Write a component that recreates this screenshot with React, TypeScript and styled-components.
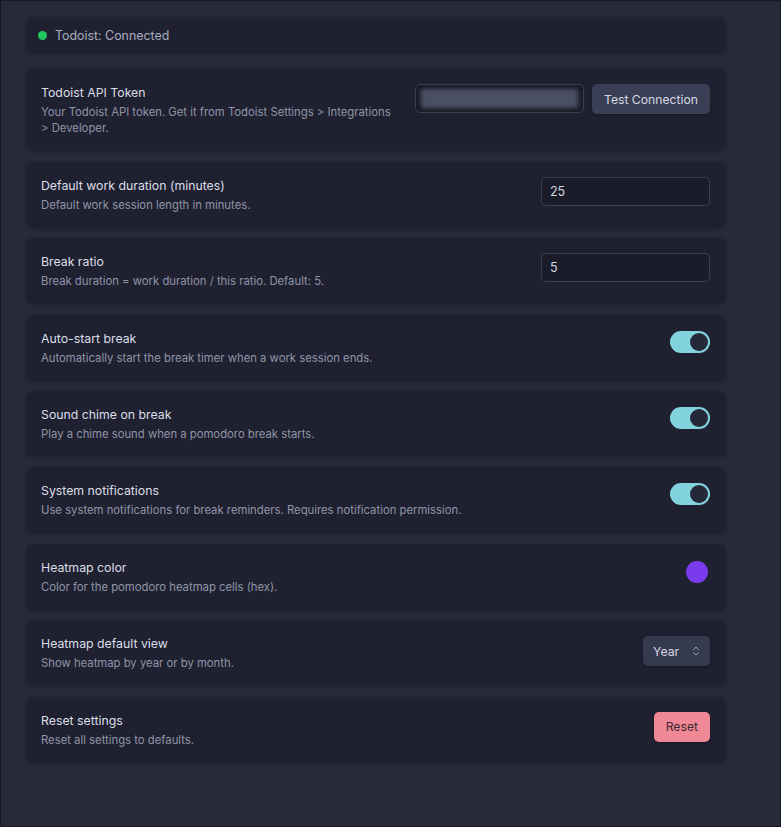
import React, { useState } from 'react';
import styled, { createGlobalStyle } from 'styled-components';
import { ChevronsUpDown } from 'lucide-react';

const GlobalStyle = createGlobalStyle`
    html, body {
        margin: 0;
        padding: 0;
        background: #262a3b;
        font-family: Inter, 'Noto Sans', sans-serif;
    }
    * {
        box-sizing: border-box;
    }
`;

const Page = styled.div`
    min-height: 100vh;
    border: 1px solid #161925;
    padding: 16px 0 40px 25px;
`;

const Column = styled.div`
    width: 700px;
    display: flex;
    flex-direction: column;
    gap: 10.4px;
`;

const Card = styled.div`
    background: #1f2131;
    border-radius: 8px;
    box-shadow: 0 1px 4px rgba(0, 0, 0, 0.22);
`;

const StatusCard = styled(Card)`
    height: 36px;
    display: flex;
    align-items: center;
    gap: 8px;
    padding: 0 12px;
    margin-bottom: 6px;
    font-size: 12.4px;
    color: #a9adbe;
`;

const Dot = styled.span<{ $color: string }>`
    width: 9px;
    height: 9px;
    border-radius: 50%;
    background: ${(p) => p.$color};
`;

const Row = styled(Card)`
    display: flex;
    justify-content: space-between;
    align-items: flex-start;
    gap: 24px;
    padding: 15px 16px 15px 15px;
`;

const TextBlock = styled.div`
    flex: 1;
    display: flex;
    flex-direction: column;
    gap: 2px;
`;

const Title = styled.div`
    font-size: 12.3px;
    line-height: 18px;
    color: #dcdfe8;
`;

const Description = styled.div`
    font-size: 11.3px;
    line-height: 16px;
    color: #9094a6;
`;

const Controls = styled.div`
    display: flex;
    gap: 8px;
    flex-shrink: 0;
`;

const TextInput = styled.input`
    width: 169px;
    height: 29px;
    padding: 0 8px;
    background: #1a1c29;
    border: 1px solid #3a3e52;
    border-radius: 5px;
    color: #d3d6e0;
    font-family: inherit;
    font-size: 12.5px;
    outline: none;
`;

const SecretField = styled.div`
    width: 169px;
    height: 29px;
    padding: 4px 5px;
    background: #1a1c29;
    border: 1px solid #3a3e52;
    border-radius: 5px;
    overflow: hidden;
`;

const SecretValue = styled.div`
    height: 100%;
    background: #4a4f63;
    border-radius: 2px;
    filter: blur(2px);
`;

const Button = styled.button<{ $variant?: 'danger' }>`
    height: 30px;
    padding: 0 12px;
    border: none;
    border-radius: 5px;
    font-family: inherit;
    font-size: 12.2px;
    background: ${(p) => (p.$variant === 'danger' ? '#f08995' : '#3b3f56')};
    color: ${(p) => (p.$variant === 'danger' ? '#3b2632' : '#d6d9e4')};
    box-shadow: 0 1px 3px rgba(0, 0, 0, 0.3);
    cursor: pointer;
`;

const Select = styled.div`
    width: 67px;
    height: 30px;
    margin-top: 1px;
    padding: 0 8px 0 10px;
    display: flex;
    align-items: center;
    justify-content: space-between;
    background: #363a4f;
    border-radius: 5px;
    font-size: 12.3px;
    color: #d6d9e4;
    box-shadow: 0 1px 3px rgba(0, 0, 0, 0.3);
    svg {
        color: #9a9eb0;
    }
`;

const Track = styled.button<{ $on: boolean }>`
    width: 40px;
    height: 22px;
    margin-top: 1px;
    padding: 2px;
    border: none;
    border-radius: 11px;
    display: flex;
    justify-content: ${(p) => (p.$on ? 'flex-end' : 'flex-start')};
    background: ${(p) => (p.$on ? '#83d3de' : '#3b3f56')};
    cursor: pointer;
`;

const Knob = styled.span`
    width: 18px;
    height: 18px;
    border-radius: 50%;
    background: #252839;
`;

const Swatch = styled.span<{ $color: string }>`
    width: 22px;
    height: 22px;
    margin: 2px 2px 0 0;
    border-radius: 50%;
    background: ${(p) => p.$color};
`;

const Toggle = ({ initial }: { initial: boolean }) => {
    const [on, setOn] = useState(initial);
    return (
        <Track $on={on} onClick={() => setOn(!on)}>
            <Knob />
        </Track>
    );
};

type SettingProps = {
    title: string;
    description: string;
    children: React.ReactNode;
};

const Setting = ({ title, description, children }: SettingProps) => (
    <Row>
        <TextBlock>
            <Title>{title}</Title>
            <Description>{description}</Description>
        </TextBlock>
        <Controls>{children}</Controls>
    </Row>
);

const App = () => {
    return (
        <Page>
            <GlobalStyle />
            <Column>
                <StatusCard>
                    <Dot $color="#22c55e" />
                    Todoist: Connected
                </StatusCard>
                <Setting
                    title="Todoist API Token"
                    description="Your Todoist API token. Get it from Todoist Settings > Integrations > Developer."
                >
                    <SecretField>
                        <SecretValue />
                    </SecretField>
                    <Button>Test Connection</Button>
                </Setting>
                <Setting title="Default work duration (minutes)" description="Default work session length in minutes.">
                    <TextInput defaultValue="25" />
                </Setting>
                <Setting title="Break ratio" description="Break duration = work duration / this ratio. Default: 5.">
                    <TextInput defaultValue="5" />
                </Setting>
                <Setting title="Auto-start break" description="Automatically start the break timer when a work session ends.">
                    <Toggle initial />
                </Setting>
                <Setting title="Sound chime on break" description="Play a chime sound when a pomodoro break starts.">
                    <Toggle initial />
                </Setting>
                <Setting
                    title="System notifications"
                    description="Use system notifications for break reminders. Requires notification permission."
                >
                    <Toggle initial />
                </Setting>
                <Setting title="Heatmap color" description="Color for the pomodoro heatmap cells (hex).">
                    <Swatch $color="#7c3aed" />
                </Setting>
                <Setting title="Heatmap default view" description="Show heatmap by year or by month.">
                    <Select>
                        Year
                        <ChevronsUpDown size={12} />
                    </Select>
                </Setting>
                <Setting title="Reset settings" description="Reset all settings to defaults.">
                    <Button $variant="danger">Reset</Button>
                </Setting>
            </Column>
        </Page>
    );
};

export default App;
